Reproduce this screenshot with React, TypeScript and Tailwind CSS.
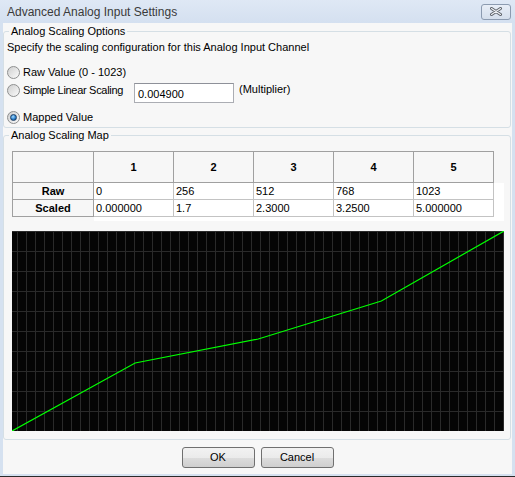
import React from 'react';

const cols = ['1', '2', '3', '4', '5'];
const rawValues = ['0', '256', '512', '768', '1023'];
const scaledValues = ['0.000000', '1.7', '2.3000', '3.2500', '5.000000'];

const Radio = ({ checked }: { checked?: boolean }) => (
  <span className="w-[13px] h-[13px] shrink-0 rounded-full border border-[#8e8f8f] bg-gradient-to-br from-[#cfcfcf] to-[#fbfbfb] flex items-center justify-center">
    {checked && (
      <span className="w-[7px] h-[7px] rounded-full border border-[#1b3f66] bg-[radial-gradient(circle_at_40%_35%,#a6dcff,#2a7fcc_55%,#0d3f70)]" />
    )}
  </span>
);

const Chart = () => {
  const w = 492;
  const h = 200;
  const vLines: number[] = [];
  for (let x = w; x > 0; x -= 9) vLines.push(x - 0.5);
  const hLines: number[] = [];
  for (let y = 0; y < h; y += 20) hLines.push(y + 0.5);
  const pts = [0, 256, 512, 768, 1023].map((r, i) => {
    const s = [0, 1.7, 2.3, 3.25, 5][i];
    return `${(r / 1023) * w},${h - (s / 5) * h}`;
  });
  return (
    <svg width={w} height={h} className="block bg-[#050505]">
      {vLines.map((x) => (
        <line key={'v' + x} x1={x} y1={0} x2={x} y2={h} stroke="#2a2a2a" strokeWidth={1} />
      ))}
      {hLines.map((y) => (
        <line key={'h' + y} x1={0} y1={y} x2={w} y2={y} stroke="#2a2a2a" strokeWidth={1} />
      ))}
      <polyline points={pts.join(' ')} fill="none" stroke="#00ff00" strokeWidth={1.2} />
    </svg>
  );
};

const Button = ({ label }: { label: string }) => (
  <button className="w-[73px] h-[21px] rounded-[3px] border border-[#707070] bg-[linear-gradient(#f2f2f2_0%,#ebebeb_50%,#dddddd_50%,#cfcfcf_100%)] text-[11px] text-black leading-none">
    {label}
  </button>
);

export default function App() {
  return (
    <div className="w-[515px] h-[477px] flex flex-col bg-[#d5e1f0] border-b border-[#2b2b2b] font-['Liberation_Sans',Arial,sans-serif] text-[11px] text-black overflow-hidden">
      {/* title bar */}
      <div className="h-[23px] shrink-0 flex items-center justify-between pl-[7px] pr-[4px] bg-gradient-to-b from-[#dfe8f5] to-[#d4e0f0]">
        <span className="text-[12px] text-[#3a3a3a]">Advanced Analog Input Settings</span>
        <div className="w-[30px] h-[16px] rounded-[3px] border border-[#8c9bb0] bg-gradient-to-b from-[#e8eef7] to-[#d5dfec] flex items-center justify-center">
          <svg width="14" height="9" viewBox="0 0 14 9">
            <path d="M2.5 1.5 L11.5 7.5 M11.5 1.5 L2.5 7.5" stroke="#5a5f66" strokeWidth="3" strokeLinecap="round" />
            <path d="M2.5 1.5 L11.5 7.5 M11.5 1.5 L2.5 7.5" stroke="#eef1f5" strokeWidth="1.2" strokeLinecap="round" />
          </svg>
        </div>
      </div>

      {/* body */}
      <div className="flex-1 mx-[3px] mb-[2px] bg-[#f7f7f7] flex flex-col pt-[2px] pr-[1px]">
        <fieldset className="h-[103px] border border-[#d5dfe5] rounded-[3px] px-[3px] flex flex-col">
          <legend className="ml-[2px] px-[2px] leading-[13px]">Analog Scaling Options</legend>
          <div className="mt-[3px] h-[13px] leading-[13px]">
            Specify the scaling configuration for this Analog Input Channel
          </div>
          <div className="mt-[10px] h-[16px] flex items-center gap-[3px]">
            <Radio />
            <span>Raw Value (0 - 1023)</span>
          </div>
          <div className="mt-[3px] h-[20px] flex items-start">
            <div className="w-[127px] h-[14px] flex items-center gap-[3px] tracking-[-0.3px]">
              <Radio />
              <span>Simple Linear Scaling</span>
            </div>
            <div className="w-[100px] h-[20px] border border-[#abadb3] border-t-[#8e9199] bg-white flex items-center pl-[3px] pt-[2px]">
              0.004900
            </div>
            <span className="ml-[5px] h-[12px] leading-[12px]">(Multiplier)</span>
          </div>
          <div className="mt-[6px] h-[16px] flex items-center gap-[3px]">
            <Radio checked />
            <span>Mapped Value</span>
          </div>
        </fieldset>

        <fieldset className="mt-[1px] border border-[#d5dfe5] rounded-[3px] px-[3px] pb-[8px] flex flex-col">
          <legend className="ml-[2px] px-[2px] leading-[13px]">Analog Scaling Map</legend>
          <div className="mt-[9px] ml-[5px] w-[492px] h-[70px] flex flex-col">
            <div className="w-[482px] h-[32px] flex border-t border-l border-[#a0a0a0]">
              <div className="w-[81px] h-[31px] border-r border-b border-[#a0a0a0]" />
              {cols.map((c) => (
                <div
                  key={c}
                  className="w-[80px] h-[31px] border-r border-b border-[#a0a0a0] flex items-center justify-center font-bold text-[11px]"
                >
                  {c}
                </div>
              ))}
            </div>
            <div className="flex">
              <div className="w-[82px] flex flex-col">
                <div className="h-[17px] border-l border-r border-b border-[#a0a0a0] flex items-center justify-center font-bold">
                  Raw
                </div>
                <div className="h-[17px] border-l border-r border-b border-[#a0a0a0] flex items-center justify-center font-bold">
                  Scaled
                </div>
              </div>
              <div className="w-[410px] h-[38px] bg-white flex flex-col">
                {[rawValues, scaledValues].map((row, ri) => (
                  <div key={ri} className="flex">
                    {row.map((v, i) => (
                      <div
                        key={i}
                        className="w-[80px] h-[17px] border-r border-b border-[#c3c3c3] flex items-center pl-[2px]"
                      >
                        {v}
                      </div>
                    ))}
                  </div>
                ))}
              </div>
            </div>
          </div>
          <div className="mt-[10px] ml-[5px]">
            <Chart />
          </div>
        </fieldset>

        <div className="mt-[7px] flex justify-center gap-[6px] pl-[1px]">
          <Button label="OK" />
          <Button label="Cancel" />
        </div>
      </div>
    </div>
  );
}
